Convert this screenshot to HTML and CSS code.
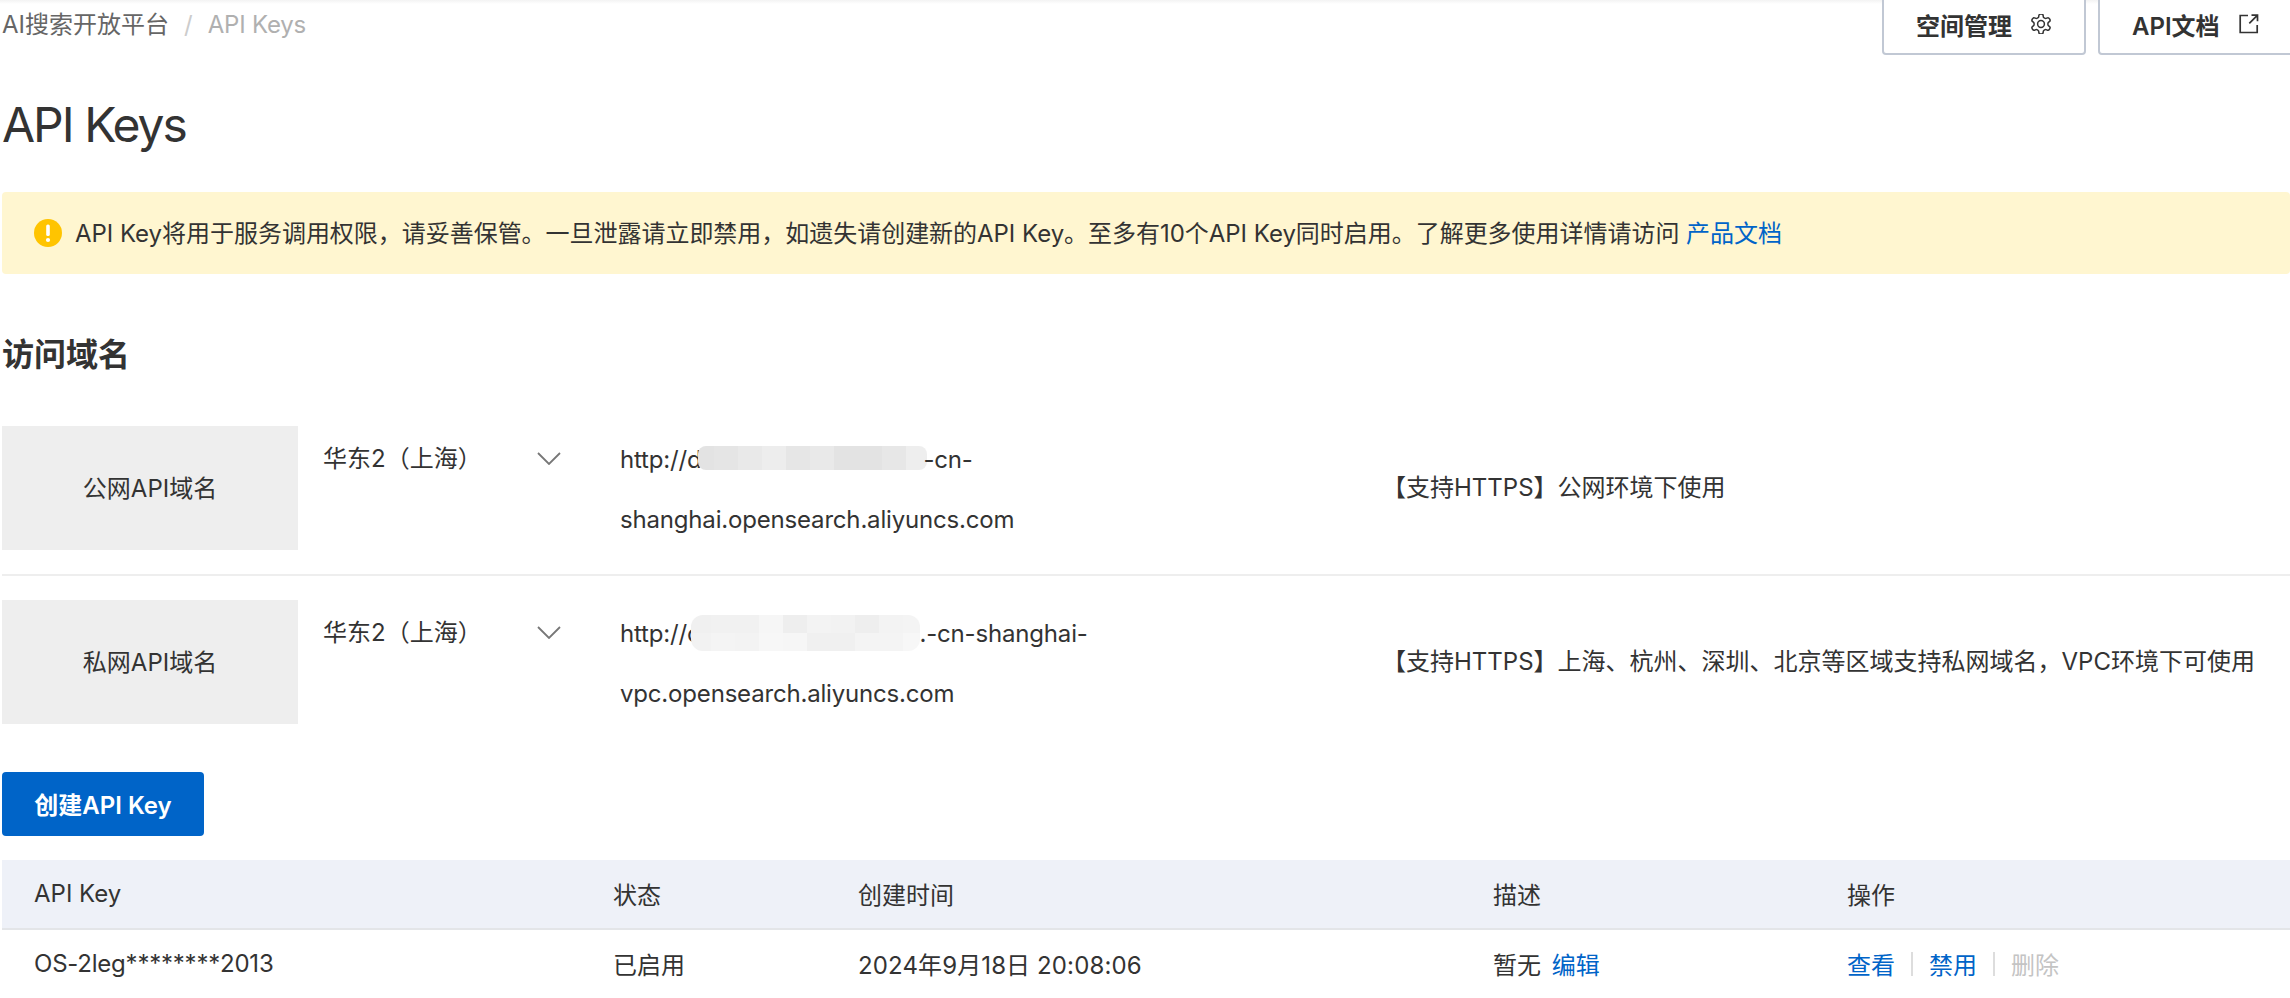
FILE: index.html
```html
<!DOCTYPE html>
<html lang="zh-CN">
<head>
<meta charset="utf-8">
<title>API Keys</title>
<link rel="stylesheet" href="styles.css">
</head>
<body>
<div class="page">
  <header class="topbar">
    <nav class="crumbs">
      <span class="crumb">AI搜索开放平台</span>
      <span class="crumb-sep">/</span>
      <span class="crumb-current">API Keys</span>
    </nav>
    <div class="top-actions">
      <button class="ghost-btn"><span>空间管理</span>
        <svg class="btn-icon" viewBox="2 2 20 20" width="20" height="20"><path d="M12.22 2h-.44a2 2 0 0 0-2 2v.18a2 2 0 0 1-1 1.73l-.43.25a2 2 0 0 1-2 0l-.15-.08a2 2 0 0 0-2.73.73l-.22.38a2 2 0 0 0 .73 2.73l.15.1a2 2 0 0 1 1 1.72v.51a2 2 0 0 1-1 1.74l-.15.09a2 2 0 0 0-.73 2.73l.22.38a2 2 0 0 0 2.73.73l.15-.08a2 2 0 0 1 2 0l.43.25a2 2 0 0 1 1 1.73V20a2 2 0 0 0 2 2h.44a2 2 0 0 0 2-2v-.18a2 2 0 0 1 1-1.73l.43-.25a2 2 0 0 1 2 0l.15.08a2 2 0 0 0 2.73-.73l.22-.39a2 2 0 0 0-.73-2.73l-.15-.08a2 2 0 0 1-1-1.74v-.5a2 2 0 0 1 1-1.74l.15-.09a2 2 0 0 0 .73-2.73l-.22-.38a2 2 0 0 0-2.73-.73l-.15.08a2 2 0 0 1-2 0l-.43-.25a2 2 0 0 1-1-1.73V4a2 2 0 0 0-2-2z" fill="none" stroke="#333" stroke-width="1.5" stroke-linejoin="round"/><circle cx="12" cy="12" r="3.4" fill="none" stroke="#333" stroke-width="1.5"/></svg>
      </button>
      <button class="ghost-btn"><span>API文档</span>
        <svg class="btn-icon" viewBox="0 0 20 20" width="20" height="20"><path d="M9 1.5H1.2v17h17V11" fill="none" stroke="#333" stroke-width="1.7"/><path d="M12.5 1.2h6v6M18.3 1.4l-8 8" fill="none" stroke="#333" stroke-width="1.7"/></svg>
      </button>
    </div>
  </header>

  <h1 class="title">API Keys</h1>

  <div class="alert">
    <svg class="alert-icon" viewBox="0 0 28 28" width="28" height="28"><circle cx="14" cy="14" r="14" fill="#FFC400"/><rect x="12.2" y="5.5" width="3.6" height="11.5" rx="1.6" fill="#fff"/><circle cx="14" cy="21" r="2.1" fill="#fff"/></svg>
    <span class="alert-text">API Key将用于服务调用权限，请妥善保管。一旦泄露请立即禁用，如遗失请创建新的API Key。至多有10个API Key同时启用。了解更多使用详情请访问 <a class="link">产品文档</a></span>
  </div>

  <h2 class="section">访问域名</h2>

  <section class="domain-row">
    <div class="domain-label">公网API域名</div>
    <div class="domain-select"><span>华东2（上海）</span>
      <svg viewBox="0 0 24 13" width="24" height="13"><path d="M1 1l11 11L23 1" fill="none" stroke="#777" stroke-width="1.8"/></svg>
    </div>
    <div class="domain-url">http://d<span class="blur blur-a"></span>-cn-<br>shanghai.opensearch.aliyuncs.com</div>
    <div class="domain-desc">【支持HTTPS】公网环境下使用</div>
  </section>
  <section class="domain-row second-row">
    <div class="domain-label">私网API域名</div>
    <div class="domain-select"><span>华东2（上海）</span>
      <svg viewBox="0 0 24 13" width="24" height="13"><path d="M1 1l11 11L23 1" fill="none" stroke="#777" stroke-width="1.8"/></svg>
    </div>
    <div class="domain-url">http://c<span class="blur blur-b"></span>.-cn-shanghai-<br>vpc.opensearch.aliyuncs.com</div>
    <div class="domain-desc">【支持HTTPS】上海、杭州、深圳、北京等区域支持私网域名，VPC环境下可使用</div>
  </section>

  <button class="primary-btn">创建API Key</button>

  <div class="table">
    <div class="tr th">
      <div>API Key</div><div>状态</div><div>创建时间</div><div>描述</div><div>操作</div>
    </div>
    <div class="tr td">
      <div class="key-cell">OS-2leg********2013</div>
      <div>已启用</div>
      <div class="date-cell">2024年9月18日 20:08:06</div>
      <div>暂无 <a class="link edit">编辑</a></div>
      <div class="ops"><a class="link">查看</a><i></i><a class="link">禁用</a><i></i><a class="disabled">删除</a></div>
    </div>
  </div>
</div>
</body>
</html>
```
FILE: styles.css
```css
* { box-sizing: border-box; }
html, body { margin: 0; height: 100%; overflow: hidden; background: #fff; }
body {
  font-family: Inter, "Noto Sans CJK SC", sans-serif;
  font-size: 24px;
  color: #333;
}
.page {
  width: 2290px;
  height: 998px;
  padding-left: 2px;
  overflow: hidden;
  background: linear-gradient(#f3f3f3, #fff 4px);
}
.topbar { display: flex; justify-content: space-between; height: 55px; }
.crumbs { display: flex; align-items: flex-start; line-height: 50px; }
.crumb { color: #666; }
.crumb-sep { color: #ccc; margin: 0 15px; }
.crumb-current { color: #b0b0b0; letter-spacing: -0.2px; }
.top-actions { display: flex; gap: 12px; margin-top: -4px; margin-right: -12px; }
.ghost-btn {
  display: flex;
  align-items: center;
  width: 204px;
  height: 59px;
  padding: 0 0 3px 32px;
  background: #fff;
  border: 2px solid #c1c8d4;
  border-radius: 4px;
  font: 600 24px Inter, "Noto Sans CJK SC", sans-serif;
  color: #333;
}
.btn-icon { flex: none; margin-left: 19px; }
.title {
  margin: 34px 0 0;
  font-size: 48px;
  font-weight: 400;
  line-height: 72px;
  letter-spacing: -2px;
}
.alert {
  display: flex;
  align-items: center;
  height: 82px;
  margin-top: 31px;
  padding-left: 32px;
  background: #fff6d0;
  border-radius: 4px;
}
.alert-icon { flex: none; margin-right: 13px; }
.alert-text { margin-bottom: 4px; letter-spacing: -0.03px; }
.link { color: #0064c8; }
.section { margin: 57px 0 0; font-size: 32px; font-weight: 600; line-height: 48px; }
.domain-row {
  display: grid;
  grid-template-columns: 296px 322px 762px 1fr;
  height: 150px;
  margin-top: 47px;
  border-bottom: 2px solid #eee;
}
.second-row { margin-top: 0; padding-top: 24px; height: 148px; border-bottom: 0; }
.domain-label {
  display: flex;
  align-items: center;
  justify-content: center;
  height: 124px;
  padding-bottom: 3px;
  background: #eee;
}
.domain-select {
  display: flex;
  justify-content: space-between;
  align-items: flex-start;
  padding: 13px 59px 0 25px;
  line-height: 40px;
}
.domain-select svg { margin-top: 13px; }
.domain-url { padding-top: 4px; line-height: 60px; letter-spacing: -0.18px; white-space: nowrap; }
.blur { display: inline-block; vertical-align: middle; }
.blur-a {
  width: 229px;
  height: 24px;
  margin: -6px -4px 0 -3px;
  border-radius: 8px;
  background: linear-gradient(90deg,
    #e3e3e3 0 16px, #e5e5e5 16px 40px, #e9e9e9 40px 64px, #ededed 64px 88px,
    #e6e6e6 88px 112px, #e9e9e9 112px 136px, #e3e3e3 136px 184px,
    #e7e7e7 184px 208px, #eeeeee 208px 229px);
}
.blur-b {
  width: 229px;
  height: 36px;
  margin: -4px 0 0 -10px;
  border-radius: 12px;
  background:
    linear-gradient(90deg,
      #f0f0f0 0 20px, #f1f1f1 20px 68px, #f6f6f6 68px 92px, #eeeeee 92px 116px,
      #f3f3f3 116px 140px, #f2f2f2 140px 164px, #eeeeee 164px 188px,
      #f3f3f3 188px 212px, #f4f4f4 212px 229px) top / 100% 50% no-repeat,
    linear-gradient(90deg,
      #f2f2f2 0 20px, #f4f4f4 20px 44px, #f3f3f3 44px 68px, #f7f7f7 68px 92px,
      #f6f6f6 92px 116px, #f0f0f0 116px 164px, #f4f4f4 164px 212px, #f7f7f7 212px 229px) bottom / 100% 50% no-repeat;
}
.domain-desc { display: flex; align-items: center; height: 124px; padding-bottom: 5px; }
.primary-btn {
  display: block;
  width: 202px;
  height: 64px;
  margin-top: 48px;
  padding: 0 0 2px;
  border: 0;
  border-radius: 4px;
  background: #0064c8;
  color: #fff;
  font: 600 24px Inter, "Noto Sans CJK SC", sans-serif;
}
.table { margin-top: 24px; }
.tr {
  display: grid;
  grid-template-columns: 579px 245px 635px 354px 1fr;
  padding-left: 32px;
  align-items: center;
}
.th { height: 70px; padding-bottom: 2px; background: #eef1f8; border-bottom: 2px solid #e3e5e8; }
.td { height: 70px; padding-bottom: 3px; }
.key-cell { letter-spacing: -0.22px; }
.date-cell { letter-spacing: 0.12px; }
.edit { margin-left: 4px; }
.ops { display: flex; align-items: center; }
.ops i { width: 2px; height: 24px; margin: 0 16px; background: #ddd; }
.disabled { color: #c4c4c4; }
```
